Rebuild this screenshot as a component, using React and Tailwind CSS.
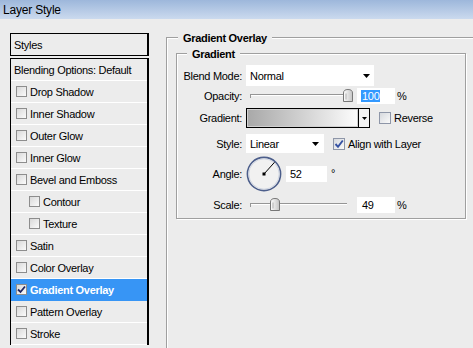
import React from 'react';

const items = [
  { name: 'Drop Shadow' },
  { name: 'Inner Shadow' },
  { name: 'Outer Glow' },
  { name: 'Inner Glow' },
  { name: 'Bevel and Emboss' },
  { name: 'Contour', sub: true },
  { name: 'Texture', sub: true },
  { name: 'Satin' },
  { name: 'Color Overlay' },
  { name: 'Gradient Overlay', active: true },
  { name: 'Pattern Overlay' },
  { name: 'Stroke' },
];

function ListCheck({ checked }) {
  return (
    <div className="w-[11px] h-[11px] shrink-0 border border-[#8d8d8d] bg-linear-to-br from-[#d9d9d9] to-[#fbfbfb] flex items-center justify-center">
      {checked && (
        <svg width="9" height="9" viewBox="0 0 9 9">
          <path d="M1 4.5 L3.5 7 L8 1.5" fill="none" stroke="#1f2460" strokeWidth="1.8" />
        </svg>
      )}
    </div>
  );
}

function FormCheck({ checked }) {
  return (
    <div className="w-[12px] h-[12px] shrink-0 border border-[#8e96a8] bg-linear-to-br from-[#d6d9de] to-[#fafafa] flex items-center justify-center">
      {checked && (
        <svg width="10" height="10" viewBox="0 0 10 10">
          <path d="M1.5 5 L4 7.8 L8.8 1.5" fill="none" stroke="#3551a3" strokeWidth="1.9" />
        </svg>
      )}
    </div>
  );
}

function Arrow({ w = 7, h = 4 }) {
  return (
    <svg width={w} height={h} viewBox={`0 0 ${w} ${h}`}>
      <path d={`M0 0H${w}L${w / 2} ${h}Z`} fill="#000" />
    </svg>
  );
}

function Thumb() {
  return (
    <svg width="10" height="13" viewBox="0 0 10 13">
      <defs>
        <linearGradient id="tg" x1="0" x2="1" y1="0" y2="0">
          <stop offset="0" stopColor="#ffffff" />
          <stop offset="1" stopColor="#c4c4c4" />
        </linearGradient>
      </defs>
      <path d="M0.5 4 Q0.5 0.5 5 0.5 Q9.5 0.5 9.5 4 V12.5 H0.5 Z" fill="url(#tg)" stroke="#777" />
      <path d="M3 4.5 V10.5" stroke="#b0b0b0" />
    </svg>
  );
}

function Slider({ width, pos }) {
  return (
    <div className="relative h-[14px]" style={{ width }}>
      <div className="absolute left-[4px] right-[6px] top-[5px] h-[2px] border-t border-[#959595] border-b border-b-white" />
      <div className="absolute left-[4px] top-[5px] w-px h-[4px] bg-[#959595]" />
      <div className="absolute top-0" style={{ left: pos }}>
        <Thumb />
      </div>
    </div>
  );
}

function Label({ children }) {
  return <div className="w-[65px] shrink-0 text-right">{children}</div>;
}

export default function App() {
  const a = (52 * Math.PI) / 180;
  return (
    <div className="w-[473px] h-[348px] overflow-hidden bg-[#ececec] text-black text-[11px] leading-[14px] tracking-[-0.3px] font-[family-name:'Liberation_Sans',Arial,sans-serif]">
      <div className="h-[19px] bg-linear-to-b from-[#9db7db] to-[#cbdaee] flex items-center pl-[3px] text-[12px] tracking-[-0.2px]">
        Layer Style
      </div>

      <div className="flex">
        {/* left list */}
        <div className="ml-[10px] mt-[14px] w-[139px] shrink-0">
          <div className="h-[23px] border border-black border-r-2 flex items-center pl-[3px]">Styles</div>
          <div className="mt-[2px] border-t border-l border-r-2 border-black">
            <div className="h-[22px] border-b border-white flex items-center pl-[3px]">
              Blending Options: Default
            </div>
            {items.map((it) => (
              <div
                key={it.name}
                className={
                  'h-[22px] border-b flex items-center ' +
                  (it.sub ? 'pl-[18px] ' : 'pl-[5px] ') +
                  (it.active ? 'bg-[#3795f5] border-[#3795f5] text-white font-bold' : 'border-white')
                }
              >
                <ListCheck checked={it.active} />
                <span className="ml-[3px]">{it.name}</span>
              </div>
            ))}
          </div>
        </div>

        {/* right settings */}
        <div className="ml-[17px] mt-[18px] flex-1 min-w-[320px] h-[400px] relative border-t border-l border-[#9f9f9f] shadow-[inset_1px_1px_0_#fff]">
          <div className="absolute -top-[7px] left-[11px] px-[5px] bg-[#ececec] font-bold">Gradient Overlay</div>

          <div className="ml-[9px] mt-[15px] w-[290px] h-[166px] relative border border-[#9f9f9f] shadow-[inset_1px_1px_0_#fff,1px_1px_0_#fff] pt-[11px] flex flex-col">
            <div className="absolute -top-[7px] left-[10px] px-[5px] bg-[#ececec] font-bold">Gradient</div>

            <div className="flex items-center h-[21px]">
              <Label>Blend Mode:</Label>
              <div className="ml-[4px] w-[128px] h-[21px] bg-white flex items-center justify-between pl-[4px] pr-[4px]">
                <span>Normal</span>
                <Arrow />
              </div>
            </div>

            <div className="flex items-center h-[16px] mt-[2px]">
              <Label>Opacity:</Label>
              <div className="ml-[4px]">
                <Slider width={107} pos={97} />
              </div>
              <div className="ml-[4px] w-[38px] h-[16px] bg-white flex items-center pl-[4px]">
                <span className="bg-[#3399ff] text-white px-[1px] leading-[12px]">100</span>
              </div>
              <span className="ml-[2px]">%</span>
            </div>

            <div className="flex items-center h-[20px] mt-[4px]">
              <Label>Gradient:</Label>
              <div className="ml-[4px] w-[124px] h-[20px] border border-black flex">
                <div className="flex-1 border border-[#d0d0d0] bg-linear-to-r from-[#a9a9a9] to-[#fcfcfc]" />
                <div className="w-[11px] border-l border-black bg-[#f2f2f2] flex items-center justify-center">
                  <Arrow w={5} h={3} />
                </div>
              </div>
              <div className="ml-[9px]">
                <FormCheck />
              </div>
              <span className="ml-[3px]">Reverse</span>
            </div>

            <div className="flex items-center h-[19px] mt-[6px]">
              <Label>Style:</Label>
              <div className="ml-[4px] w-[78px] h-[19px] bg-white flex items-center justify-between pl-[4px] pr-[5px]">
                <span>Linear</span>
                <Arrow />
              </div>
              <div className="ml-[9px]">
                <FormCheck checked />
              </div>
              <span className="ml-[3px]">Align with Layer</span>
            </div>

            <div className="flex items-center h-[36px] mt-[3px]">
              <Label>Angle:</Label>
              <svg className="ml-[4px]" width="36" height="36" viewBox="0 0 36 36">
                <circle cx="18" cy="18" r="16.6" fill="#f1f1f1" stroke="#4c5e8b" strokeWidth="1.6" />
                <circle cx="18" cy="18" r="15.2" fill="none" stroke="#c8cfdd" strokeWidth="0.8" />
                <line x1="18" y1="18" x2={18 + 15.5 * Math.cos(a) + 1} y2={18 - 15.5 * Math.sin(a) + 0.5} stroke="#000" strokeWidth="1" />
                <rect x="16.5" y="16.5" width="3" height="3" fill="#000" />
              </svg>
              <div className="ml-[4px] w-[41px] h-[16px] bg-white flex items-center pl-[4px]">52</div>
              <span className="ml-[4px] self-start mt-[10px]">°</span>
            </div>

            <div className="flex items-center h-[16px] mt-[5px]">
              <Label>Scale:</Label>
              <div className="ml-[4px]">
                <Slider width={107} pos={24} />
              </div>
              <div className="ml-[4px] w-[38px] h-[16px] bg-white flex items-center pl-[5px]">49</div>
              <span className="ml-[2px]">%</span>
            </div>
          </div>
        </div>
      </div>
    </div>
  );
}
